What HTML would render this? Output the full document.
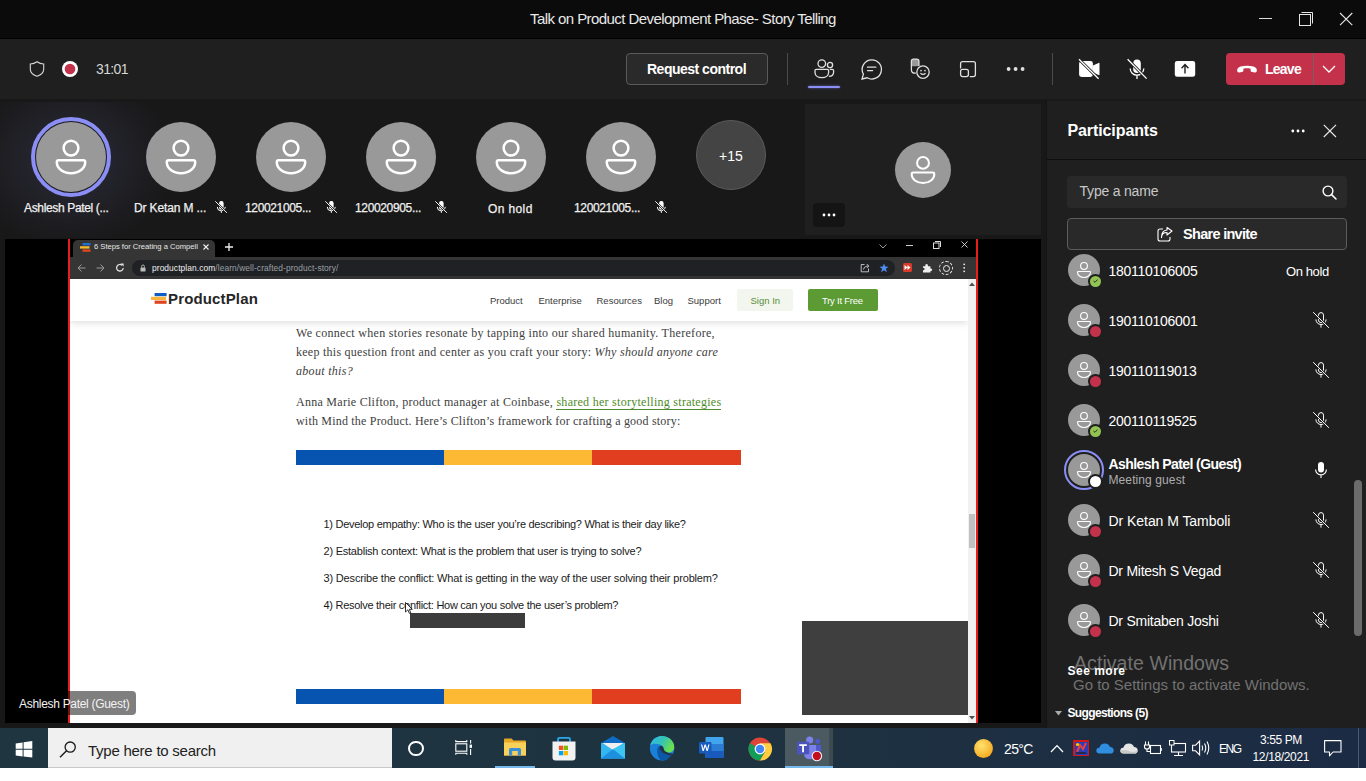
<!DOCTYPE html>
<html><head><meta charset="utf-8">
<style>
*{margin:0;padding:0;box-sizing:border-box}
html,body{width:1366px;height:781px;overflow:hidden;background:#fff;font-family:"Liberation Sans",sans-serif;position:relative}
.a{position:absolute}
.t{position:absolute;white-space:nowrap;line-height:1}
#title{left:0;top:0;width:1366px;height:39px;background:#0b0b0b;border-bottom:1px solid #000}
#tb{left:0;top:39px;width:1366px;height:60px;background:#1f1f1f}
#stage{left:0;top:99px;width:1047px;height:629px;background:#181818}
#panel{left:1047px;top:99px;width:319px;height:629px;background:#1f1f1f}
#task{left:0;top:728px;width:1366px;height:40px;background:linear-gradient(90deg,#1f3540 0%,#1e3340 50%,#1c2b44 100%)}
svg{position:absolute;overflow:visible}
.av{position:absolute;border-radius:50%;background:#999}
.nm{position:absolute;color:#f0f0f0;font-size:12px;white-space:nowrap;line-height:1;letter-spacing:-0.35px;-webkit-text-stroke:0.25px #f0f0f0}
.sf{font-family:"Liberation Serif",serif;font-size:12px;color:#404040;line-height:19px;margin-top:-1px}
.li{font-size:11px;color:#1a1a1a;line-height:27px}
.pr{position:absolute;color:#fff;font-size:14px;letter-spacing:-0.28px;white-space:nowrap;line-height:1}
</style></head><body>
<svg width="0" height="0" style="position:absolute">
<defs>
<symbol id="person" viewBox="0 0 70 70">
<circle cx="35" cy="26.1" r="7.4" fill="none" stroke="#fff" stroke-width="2.5"/>
<path d="M22.6 38.2H47.4Q49.2 38.2 49.2 40C49.2 46.5 43 51.3 35 51.3C27 51.3 20.8 46.5 20.8 40Q20.8 38.2 22.6 38.2Z" fill="none" stroke="#fff" stroke-width="2.5"/>
</symbol>
<symbol id="micoff" viewBox="0 0 12 12">
<path d="M4.1 2.2A2.25 2.25 0 0 1 8.6 2.2V6.4A2.25 2.25 0 0 1 4.1 6.4Z" fill="#fff"/>
<path d="M2.3 5.9A4 4 0 0 0 10.3 5.9M6.35 9.9V11.8" fill="none" stroke="#fff" stroke-width="1"/>
<path d="M0.3 0.3L11.9 11.8" stroke="#1b1b1b" stroke-width="2"/>
<path d="M0.3 0.3L11.9 11.8" stroke="#fff" stroke-width="0.95"/>
</symbol>
<symbol id="micoff2" viewBox="0 0 16 16">
<rect x="5.5" y="0.6" width="5" height="10" rx="2.5" fill="none" stroke="#fff" stroke-width="1"/>
<path d="M2.9 7.4A5.1 5.1 0 0 0 13.1 7.4M8 12.5V15.6" fill="none" stroke="#fff" stroke-width="1"/>
<path d="M0.2 0.2L15.9 15.8" stroke="#1f1f1f" stroke-width="2.2"/>
<path d="M0.2 0.2L15.9 15.8" stroke="#fff" stroke-width="1"/>
</symbol>
</defs>
</svg>

<!-- TITLE BAR -->
<div id="title" class="a">
  <div class="t" style="left:530px;top:11px;font-size:15px;color:#e8e8e8;letter-spacing:-0.57px">Talk on Product Development Phase- Story Telling</div>
  <div class="a" style="left:1259px;top:18px;width:13px;height:1px;background:#ddd"></div>
  <svg style="left:1299px;top:12px" width="15" height="15"><rect x="0.5" y="2.5" width="11" height="11" fill="none" stroke="#e6e6e6"/><path d="M2.5 0.5H13.5V11.5" fill="none" stroke="#e6e6e6"/></svg>
  <svg style="left:1339px;top:12px" width="14" height="14"><path d="M1 1L13.3 13.2M13.3 1L1 13.2" stroke="#e6e6e6" stroke-width="1.1"/></svg>
</div>

<!-- TOOLBAR -->
<div id="tb" class="a">
  <svg style="left:29px;top:22px" width="16" height="16" viewBox="0 0 16 16"><path d="M8 0.8C10 2.3 12.3 3 14.7 3V8.2C14.7 11.5 12.3 13.7 8 15.3C3.7 13.7 1.3 11.5 1.3 8.2V3C3.7 3 6 2.3 8 0.8Z" fill="none" stroke="#d6d6d6" stroke-width="1.1"/></svg>
  <svg style="left:62px;top:22px" width="16" height="16"><circle cx="8" cy="8" r="8" fill="#fff"/><circle cx="8" cy="8" r="5.3" fill="#c4314b"/></svg>
  <div class="t" style="left:96px;top:23px;font-size:14px;color:#d6d6d6;letter-spacing:-0.65px">31:01</div>
  <div class="a" style="left:626px;top:14px;width:142px;height:32px;border:1px solid #5a5a5a;border-radius:4px;background:#2a2a2a"></div>
  <div class="t" style="left:647px;top:23px;font-size:14px;font-weight:bold;color:#fff;letter-spacing:-0.5px">Request control</div>
  <div class="a" style="left:787px;top:14px;width:1px;height:32px;background:#4a4a4a"></div>
  <!-- people -->
  <svg style="left:814px;top:20px" width="21" height="20" viewBox="0 0 21 20"><circle cx="7.8" cy="4.6" r="3.8" fill="none" stroke="#e0e0e0" stroke-width="1.3"/><circle cx="16" cy="6" r="2.6" fill="none" stroke="#e0e0e0" stroke-width="1.3"/><path d="M2.2 10.4H13.4Q14.6 10.4 14.6 11.6V13.4C14.6 16.5 11.7 18.6 7.9 18.6C4 18.6 1 16.5 1 13.4V11.6Q1 10.4 2.2 10.4Z" fill="none" stroke="#e0e0e0" stroke-width="1.3"/><path d="M15.8 10.4H18.3Q19.6 10.4 19.6 11.7V13C19.6 15.6 17.8 17.3 14.9 17.3" fill="none" stroke="#e0e0e0" stroke-width="1.3"/></svg>
  <div class="a" style="left:808px;top:47px;width:32px;height:2.4px;border-radius:1.2px;background:#8b8ff7;box-shadow:0 0 3px rgba(127,133,245,0.6)"></div>
  <!-- chat -->
  <svg style="left:861px;top:20px" width="22" height="21" viewBox="0 0 22 21"><path d="M10.7 0.8A9.6 9.6 0 1 1 6.2 18.8L1 20L2.4 15.1A9.6 9.6 0 0 1 10.7 0.8Z" fill="none" stroke="#e0e0e0" stroke-width="1.3"/><path d="M6.5 8.2H14.8M6.5 11.6H11.6" stroke="#e0e0e0" stroke-width="1.3" stroke-linecap="round"/></svg>
  <!-- hand emoji -->
  <svg style="left:909px;top:18px" width="24" height="23" viewBox="0 0 24 23"><path d="M2.4 4.2Q2.4 2.1 4.5 2.1H7.8Q9.9 2.1 9.9 4.2V9.2H2.4Z" fill="#9a9a9a"/><path d="M2.4 4.2Q2.4 2.1 4.5 2.1H7.8Q9.9 2.1 9.9 4.2V8.6L11.6 9.8Q12.6 10.6 11.9 11.6L8.6 15.2Q7.6 16.2 5.8 16.2Q2.4 16.2 2.4 12.4Z" fill="none" stroke="#e0e0e0" stroke-width="1.3" stroke-linejoin="round"/><circle cx="14" cy="15.1" r="6.2" fill="#1f1f1f" stroke="#1f1f1f" stroke-width="2.4"/><circle cx="14" cy="15.1" r="6.2" fill="#1f1f1f" stroke="#e0e0e0" stroke-width="1.3"/><circle cx="12" cy="13.6" r="0.85" fill="#e0e0e0"/><circle cx="16" cy="13.6" r="0.85" fill="#e0e0e0"/><path d="M11.4 16.2Q14 18.4 16.6 16.2" fill="none" stroke="#e0e0e0" stroke-width="1.2"/></svg>
  <!-- layout -->
  <svg style="left:959px;top:21px" width="18" height="18" viewBox="0 0 18 18"><path d="M1.6 8.4V3.6Q1.6 1.6 3.6 1.6H14.4Q16.4 1.6 16.4 3.6V14.6Q16.4 16.6 14.4 16.6H10.8" fill="none" stroke="#e0e0e0" stroke-width="1.3"/><rect x="1.6" y="9.3" width="7.8" height="7.3" rx="2" fill="none" stroke="#e0e0e0" stroke-width="1.3"/></svg>
  <!-- more -->
  <svg style="left:1006px;top:27px" width="20" height="6" viewBox="0 0 20 6"><circle cx="2.6" cy="3" r="1.9" fill="#e0e0e0"/><circle cx="9.6" cy="3" r="1.9" fill="#e0e0e0"/><circle cx="16.6" cy="3" r="1.9" fill="#e0e0e0"/></svg>
  <div class="a" style="left:1052px;top:14px;width:1px;height:32px;background:#4a4a4a"></div>
  <!-- cam off -->
  <svg style="left:1077px;top:19px" width="24" height="22" viewBox="0 0 24 22"><path d="M4.5 3.1H13.5Q15.9 3.1 15.9 5.5V16.5Q15.9 18.9 13.5 18.9H4.5Q2.1 18.9 2.1 16.5V5.5Q2.1 3.1 4.5 3.1Z" fill="#fff"/><path d="M15.9 7.6L21.6 4.9Q22.5 4.5 22.5 5.5V16.5Q22.5 17.5 21.6 17.1L15.9 14.4Z" fill="#fff"/><path d="M2 1.2L21.6 20.8" stroke="#1f1f1f" stroke-width="3"/><path d="M2 1.2L21.6 20.8" stroke="#fff" stroke-width="1.3"/></svg>
  <!-- mic off -->
  <svg style="left:1126px;top:19px" width="22" height="22" viewBox="0 0 22 22"><path d="M7.2 5.4A3.8 3.8 0 0 1 14.8 5.4V11.2A3.8 3.8 0 0 1 7.2 11.2Z" fill="#fff"/><path d="M4.2 10.4A6.8 6.8 0 0 0 17.8 10.4M11 17.2V21" fill="none" stroke="#fff" stroke-width="1.3"/><path d="M1.6 1.2L20.6 20.6" stroke="#1f1f1f" stroke-width="3"/><path d="M1.6 1.2L20.6 20.6" stroke="#fff" stroke-width="1.3"/></svg>
  <!-- share -->
  <svg style="left:1174px;top:21px" width="22" height="18" viewBox="0 0 22 18"><rect x="0.8" y="1" width="20.4" height="15.8" rx="2.4" fill="#fff"/><path d="M11 13.4V4.8M7.6 8.2L11 4.6L14.4 8.2" fill="none" stroke="#1f1f1f" stroke-width="1.4"/></svg>
  <!-- leave -->
  <div class="a" style="left:1226px;top:14px;width:119px;height:32px;border-radius:4px;background:#c4314b"></div>
  <div class="a" style="left:1313px;top:14px;width:1px;height:32px;background:#7a6066"></div>
  <svg style="left:1236px;top:26px" width="22" height="9" viewBox="0 0 22 9"><path d="M1.2 5.8C1 3.8 2 2.4 4.6 1.6C8.6 0.4 13.4 0.4 17.4 1.6C20 2.4 21 3.8 20.8 5.8C20.7 7 20 7.6 18.8 7.4L16 7C15 6.8 14.6 6.2 14.6 5.2V3.8C12.2 3.2 9.8 3.2 7.4 3.8V5.2C7.4 6.2 7 6.8 6 7L3.2 7.4C2 7.6 1.3 7 1.2 5.8Z" fill="#fff"/></svg>
  <div class="t" style="left:1265px;top:22.5px;font-size:14px;font-weight:bold;color:#fff;letter-spacing:-0.75px">Leave</div>
  <svg style="left:1322px;top:26px" width="14" height="8" viewBox="0 0 14 8"><path d="M1 1L7 7L13 1" fill="none" stroke="#fff" stroke-width="1.3"/></svg>
</div>

<!-- STAGE -->
<div id="stage" class="a">
  <div class="a" style="left:0;top:3px;width:260px;height:136px;background:radial-gradient(ellipse 105px 90px at 71px 58px,rgba(52,52,72,0.75) 0%,rgba(44,44,60,0.5) 45%,rgba(27,27,27,0) 100%)"></div>
  <!-- filmstrip -->
  <div class="a" style="left:31px;top:18px;width:80px;height:80px;border-radius:50%;border:4px solid #8b8ef4;background:#1b1b22"></div>
  <div class="av" style="left:36px;top:23px;width:70px;height:70px"></div><svg style="left:36px;top:23px" width="70" height="70"><use href="#person"/></svg>
  <div class="nm" style="left:24px;top:103px">Ashlesh Patel (...</div>
  <div class="av" style="left:146px;top:23px;width:70px;height:70px"></div><svg style="left:146px;top:23px" width="70" height="70"><use href="#person"/></svg>
  <div class="nm" style="left:134px;top:103px;letter-spacing:-0.13px">Dr Ketan M ...</div>
  <svg style="left:215px;top:102px" width="12" height="12"><use href="#micoff"/></svg>
  <div class="av" style="left:256px;top:23px;width:70px;height:70px"></div><svg style="left:256px;top:23px" width="70" height="70"><use href="#person"/></svg>
  <div class="nm" style="left:245px;top:103px">120021005...</div>
  <svg style="left:325px;top:102px" width="12" height="12"><use href="#micoff"/></svg>
  <div class="av" style="left:366px;top:23px;width:70px;height:70px"></div><svg style="left:366px;top:23px" width="70" height="70"><use href="#person"/></svg>
  <div class="nm" style="left:355px;top:103px">120020905...</div>
  <svg style="left:435px;top:102px" width="12" height="12"><use href="#micoff"/></svg>
  <div class="av" style="left:476px;top:23px;width:70px;height:70px"></div><svg style="left:476px;top:23px" width="70" height="70"><use href="#person"/></svg>
  <div class="nm" style="left:488px;top:103.5px;letter-spacing:0.38px">On hold</div>
  <div class="av" style="left:586px;top:23px;width:70px;height:70px"></div><svg style="left:586px;top:23px" width="70" height="70"><use href="#person"/></svg>
  <div class="nm" style="left:574px;top:103px">120021005...</div>
  <svg style="left:655px;top:102px" width="12" height="12"><use href="#micoff"/></svg>
  <div class="a" style="left:696px;top:21px;width:70px;height:70px;border-radius:50%;background:#444;border:1px solid #5c5c5c"></div>
  <div class="t" style="left:719px;top:49.5px;font-size:14px;color:#fff">+15</div>
  <!-- right tile -->
  <div class="a" style="left:805px;top:5px;width:236px;height:131px;background:#1f1f1f"></div>
  <div class="av" style="left:895px;top:43px;width:56px;height:56px"></div><svg style="left:895px;top:43px" width="56" height="56" viewBox="0 0 70 70"><use href="#person"/></svg>
  <div class="a" style="left:813px;top:104px;width:32px;height:24px;border-radius:4px;background:#141414"></div>
  <svg style="left:822px;top:114px" width="14" height="4"><circle cx="2" cy="2" r="1.4" fill="#fff"/><circle cx="7" cy="2" r="1.4" fill="#fff"/><circle cx="12" cy="2" r="1.4" fill="#fff"/></svg>
  <!-- shared screen -->
  <div class="a" style="left:5px;top:140px;width:1036px;height:484px;background:#000"></div>
  <div class="a" style="left:68px;top:140px;width:2px;height:484px;background:#e81e1e"></div>
  <div class="a" style="left:976px;top:140px;width:2px;height:484px;background:#e81e1e"></div>
  <div id="chrome" class="a" style="left:70px;top:140px;width:906px;height:484px;background:#fff;overflow:hidden">
    <div class="a" style="left:0;top:0;width:906px;height:18px;background:#000"></div>
    <div class="a" style="left:3px;top:1px;width:142px;height:18px;background:#353535;border-radius:5px 5px 0 0"></div>
    <svg style="left:10px;top:4px" width="11" height="9" viewBox="0 0 11 9"><rect x="2.5" y="0" width="8" height="2.4" fill="#1f6fd0"/><rect x="0" y="3.2" width="9.5" height="2.4" fill="#f5b82e"/><rect x="2.5" y="6.4" width="8" height="2.4" fill="#e0451f"/></svg>
    <div class="t" style="left:24px;top:4px;font-size:7.6px;color:#e6e6e6;letter-spacing:0px;width:104px;overflow:hidden">6 Steps for Creating a Compelling</div>
    <svg style="left:133px;top:5px" width="6" height="6"><path d="M0.5 0.5L5.5 5.5M5.5 0.5L0.5 5.5" stroke="#eee" stroke-width="1.1"/></svg>
    <svg style="left:155px;top:4px" width="8" height="8"><path d="M4 0V8M0 4H8" stroke="#eee" stroke-width="1.3"/></svg>
    <svg style="left:809px;top:5px" width="8" height="5"><path d="M0.5 0.5L4 4L7.5 0.5" fill="none" stroke="#aaa" stroke-width="0.9"/></svg>
    <div class="a" style="left:836px;top:6px;width:7px;height:1px;background:#ccc"></div>
    <svg style="left:863px;top:2px" width="8" height="8"><rect x="0.5" y="2" width="5.5" height="5.5" fill="none" stroke="#ddd" stroke-width="1"/><path d="M2 0.5H7.5V6" fill="none" stroke="#ddd" stroke-width="1"/></svg>
    <svg style="left:891px;top:2px" width="7" height="7"><path d="M0.5 0.5L6.5 6.5M6.5 0.5L0.5 6.5" stroke="#ddd" stroke-width="0.9"/></svg>
    <div class="a" style="left:0;top:18px;width:906px;height:22px;background:#353535"></div>
    <svg style="left:7px;top:25px" width="9" height="8"><path d="M8.5 4H1M4.5 0.5L1 4L4.5 7.5" fill="none" stroke="#9a9a9a" stroke-width="1"/></svg>
    <svg style="left:26px;top:25px" width="9" height="8"><path d="M0.5 4H8M4.5 0.5L8 4L4.5 7.5" fill="none" stroke="#9a9a9a" stroke-width="1"/></svg>
    <svg style="left:45px;top:24px" width="10" height="10"><path d="M8.2 5A3.3 3.3 0 1 1 7.2 2.4" fill="none" stroke="#e8e8e8" stroke-width="1.2"/><path d="M5.6 0.6H8.6V3.6Z" fill="#e8e8e8"/></svg>
    <div class="a" style="left:62px;top:21px;width:763px;height:16px;border-radius:8px;background:#202124"></div>
    <svg style="left:70px;top:25px" width="6" height="8"><rect x="0.5" y="3.4" width="5" height="4.2" rx="0.6" fill="#bbb"/><path d="M1.6 3.6V2.4A1.4 1.4 0 0 1 4.4 2.4V3.6" fill="none" stroke="#bbb" stroke-width="0.9"/></svg>
    <div class="t" style="left:82px;top:24.5px;font-size:8.4px;color:#9aa0a6;letter-spacing:0.09px"><span style="color:#f0f0f0">productplan.com</span>/learn/well-crafted-product-story/</div>
    <svg style="left:790px;top:24px" width="10" height="10"><path d="M4.5 1.5H1.2V8.8H8.5V5.5" fill="none" stroke="#ccc" stroke-width="0.9"/><path d="M3.5 6.5Q4 3 8.8 3M6.8 1L8.8 3L6.8 5" fill="none" stroke="#ccc" stroke-width="0.9"/></svg>
    <svg style="left:809px;top:24px" width="10" height="10" viewBox="0 0 10 10"><path d="M5 0.4L6.2 3.6L9.6 3.7L6.9 5.8L7.9 9.2L5 7.2L2.1 9.2L3.1 5.8L0.4 3.7L3.8 3.6Z" fill="#4d8ef0"/></svg>
    <div class="a" style="left:833px;top:24px;width:9px;height:9px;border-radius:1.5px;background:#d93a2b"></div>
    <svg style="left:834px;top:26px" width="7" height="5"><path d="M0.5 0L3.5 2.5L0.5 5ZM3.5 0L6.5 2.5L3.5 5Z" fill="#fff"/></svg>
    <svg style="left:852px;top:24px" width="10" height="10" viewBox="0 0 10 10"><path d="M1 3.2H3.2Q3 1 4.6 1Q6.2 1 6 3.2H8.4V5.4Q10.2 5.4 10.2 6.8Q10.2 8.2 8.4 8.2V9.6H1V7.2Q2.6 7.2 2.6 6Q2.6 4.8 1 4.8Z" fill="#eee"/></svg>
    <div class="a" style="left:869px;top:22px;width:14px;height:14px;border-radius:50%;border:1.2px dashed #eee"></div>
    <div class="a" style="left:872.5px;top:25.5px;width:7px;height:7px;border-radius:50%;border:1.6px solid #eee"></div>
    <svg style="left:893px;top:24px" width="3" height="10"><circle cx="1.2" cy="1.3" r="0.9" fill="#eee"/><circle cx="1.2" cy="4.8" r="0.9" fill="#eee"/><circle cx="1.2" cy="8.3" r="0.9" fill="#eee"/></svg>
    <!-- page -->
    <div class="a" style="left:0;top:40px;width:898px;height:42px;background:#fff;box-shadow:0 2px 7px rgba(0,0,0,0.13)"></div>
    <svg style="left:81px;top:54px" width="16" height="11" viewBox="0 0 16 11"><rect x="3.6" y="0" width="12" height="3.2" fill="#0f5dc2"/><rect x="0" y="3.8" width="15" height="3.2" fill="#f8b53a"/><rect x="3.6" y="7.6" width="12" height="3.2" fill="#e0451f"/></svg>
    <div class="t" style="left:98px;top:51.8px;font-size:15px;font-weight:bold;color:#262626;letter-spacing:0.15px">ProductPlan</div>
    <div class="t" style="left:420px;top:57px;font-size:9.5px;color:#3a3a3a">Product</div>
    <div class="t" style="left:468.5px;top:57px;font-size:9.5px;color:#3a3a3a">Enterprise</div>
    <div class="t" style="left:526.5px;top:57px;font-size:9.5px;color:#3a3a3a">Resources</div>
    <div class="t" style="left:584px;top:57px;font-size:9.5px;color:#3a3a3a">Blog</div>
    <div class="t" style="left:617.5px;top:57px;font-size:9.5px;color:#3a3a3a">Support</div>
    <div class="a" style="left:666.5px;top:49.5px;width:56.5px;height:22px;border-radius:2px;background:#f2f6ee"></div>
    <div class="t" style="left:680.5px;top:57px;font-size:9.5px;color:#5a8c3a">Sign In</div>
    <div class="a" style="left:738px;top:49.5px;width:70px;height:22px;border-radius:2px;background:#5c9b34"></div>
    <div class="t" style="left:752px;top:57px;font-size:9.5px;color:#fff;letter-spacing:-0.25px">Try It Free</div>
    <!-- scrollbar -->
    <div class="a" style="left:898px;top:40px;width:8px;height:444px;background:#f1f1f1"></div>
    <svg style="left:899px;top:43px" width="6" height="4"><path d="M0 4L3 0.5L6 4Z" fill="#505050"/></svg>
    <svg style="left:899px;top:477px" width="6" height="4"><path d="M0 0L3 3.5L6 0Z" fill="#505050"/></svg>
    <div class="a" style="left:899px;top:275px;width:6px;height:34px;background:#c1c1c1"></div>
    <!-- article -->
    <div class="t sf" style="left:226px;top:86px;letter-spacing:0.3px">We connect when stories resonate by tapping into our shared humanity. Therefore,</div>
    <div class="t sf" style="left:226px;top:105px;letter-spacing:0.257px">keep this question front and center as you craft your story: <i>Why should anyone care</i></div>
    <div class="t sf" style="left:226px;top:124px;letter-spacing:0.3px"><i>about this?</i></div>
    <div class="t sf" style="left:226px;top:155px;letter-spacing:0.275px">Anna Marie Clifton, product manager at Coinbase, <span style="color:#4f8a2b;border-bottom:1px solid #4f8a2b">shared her storytelling strategies</span></div>
    <div class="t sf" style="left:226px;top:174px;letter-spacing:0.2px">with Mind the Product. Here’s Clifton’s framework for crafting a good story:</div>
    <div class="a" style="left:226px;top:211px;width:148px;height:15px;background:#0654b0"></div>
    <div class="a" style="left:374px;top:211px;width:148px;height:15px;background:#fdb933"></div>
    <div class="a" style="left:522px;top:211px;width:149px;height:15px;background:#e03e1f"></div>
    <div class="t li" style="left:253.5px;top:272px;letter-spacing:-0.28px">1) Develop empathy: Who is the user you’re describing? What is their day like?</div>
    <div class="t li" style="left:253.5px;top:299px;letter-spacing:-0.226px">2) Establish context: What is the problem that user is trying to solve?</div>
    <div class="t li" style="left:253.5px;top:326px;letter-spacing:-0.17px">3) Describe the conflict: What is getting in the way of the user solving their problem?</div>
    <div class="t li" style="left:253.5px;top:353px;letter-spacing:-0.28px">4) Resolve their conflict: How can you solve the user’s problem?</div>
    <div class="a" style="left:340px;top:374px;width:115px;height:15px;background:#3c3c3c"></div>
    <svg style="left:335px;top:363px" width="8" height="12" viewBox="0 0 8 12"><path d="M0.5 0.5V10L2.8 7.8L4.4 11.4L5.8 10.8L4.3 7.3H7.3Z" fill="#fff" stroke="#000" stroke-width="0.8"/></svg>
    <div class="a" style="left:732px;top:382px;width:166px;height:94px;background:#3f3f3f"></div>
    <div class="a" style="left:226px;top:450px;width:148px;height:15px;background:#0654b0"></div>
    <div class="a" style="left:374px;top:450px;width:148px;height:15px;background:#fdb933"></div>
    <div class="a" style="left:522px;top:450px;width:149px;height:15px;background:#e03e1f"></div>
  </div>
  <div class="a" style="left:12px;top:592px;width:124px;height:24px;border-radius:4px;background:rgba(0,0,0,0.5)"></div>
  <div class="t" style="left:19px;top:599px;font-size:12px;color:#f2f2f2;letter-spacing:-0.3px">Ashlesh Patel (Guest)</div>
</div>

<!-- PANEL -->
<div id="panel" class="a">
  <div class="a" style="left:-1px;top:0;width:1px;height:629px;background:#141414"></div>
  <div class="a" style="left:0;top:0;width:319px;height:2px;background:#1a1a1a"></div>
  <div class="t" style="left:20.5px;top:23.5px;font-size:16px;font-weight:bold;color:#fff;letter-spacing:-0.1px">Participants</div>
  <svg style="left:244px;top:30px" width="14" height="4"><circle cx="1.8" cy="2" r="1.4" fill="#fff"/><circle cx="7" cy="2" r="1.4" fill="#fff"/><circle cx="12.2" cy="2" r="1.4" fill="#fff"/></svg>
  <svg style="left:276px;top:25px" width="14" height="14"><path d="M0.8 0.8L13 13M13 0.8L0.8 13" stroke="#e6e6e6" stroke-width="1.2"/></svg>
  <div class="a" style="left:0;top:59.5px;width:319px;height:1px;background:#0f0f0f"></div>
  <div class="a" style="left:20px;top:77px;width:280px;height:32px;border-radius:4px;background:#292929"></div>
  <div class="t" style="left:32.5px;top:85px;font-size:14px;color:#c8c8c8;letter-spacing:-0.2px">Type a name</div>
  <svg style="left:275px;top:86px" width="15" height="15"><circle cx="6" cy="6" r="4.9" fill="none" stroke="#fff" stroke-width="1.4"/><path d="M9.6 9.6L14 14" stroke="#fff" stroke-width="1.5" stroke-linecap="round"/></svg>
  <div class="a" style="left:20px;top:119px;width:280px;height:32px;border-radius:4px;border:1px solid #5c5c5c;background:#292929"></div>
  <svg style="left:110px;top:128px" width="16" height="15" viewBox="0 0 16 15"><path d="M6 2H3Q1 2 1 4V12Q1 14 3 14H11Q13 14 13 12V10" fill="none" stroke="#fff" stroke-width="1.1"/><path d="M4.5 10.5Q4.5 5.5 10 5.5V8L15 4L10 0.5V3Q4.5 3.5 4.5 10.5Z" fill="none" stroke="#fff" stroke-width="1.1" stroke-linejoin="round"/></svg>
  <div class="t" style="left:136px;top:128px;font-size:14.5px;font-weight:bold;color:#fff;letter-spacing:-0.7px">Share invite</div>
  <!-- rows -->
  <div class="av" style="left:21px;top:155px;width:32px;height:32px"></div><svg style="left:21px;top:155px" width="32" height="32" viewBox="0 0 70 70"><use href="#person"/></svg>
  <div class="a" style="left:40.5px;top:174.5px;width:15px;height:15px;border-radius:50%;background:#1f1f1f"></div><div class="a" style="left:42.5px;top:176.5px;width:11px;height:11px;border-radius:50%;background:#92c353"></div>
  <svg style="left:45.5px;top:179.5px" width="5" height="4"><path d="M0.5 2L2 3.3L4.5 0.6" fill="none" stroke="#1f1f1f" stroke-width="0.9"/></svg>
  <div class="pr" style="left:61.5px;top:165px">180110106005</div>
  <div class="pr" style="left:239px;top:165.5px;font-size:13px;letter-spacing:-0.4px">On hold</div>

  <div class="av" style="left:21px;top:205px;width:32px;height:32px"></div><svg style="left:21px;top:205px" width="32" height="32" viewBox="0 0 70 70"><use href="#person"/></svg>
  <div class="a" style="left:40.5px;top:224.5px;width:15px;height:15px;border-radius:50%;background:#1f1f1f"></div><div class="a" style="left:42.5px;top:226.5px;width:11px;height:11px;border-radius:50%;background:#c4314b"></div>
  <div class="pr" style="left:61.5px;top:215px">190110106001</div>
  <svg style="left:266px;top:213px" width="16" height="16"><use href="#micoff2"/></svg>

  <div class="av" style="left:21px;top:255px;width:32px;height:32px"></div><svg style="left:21px;top:255px" width="32" height="32" viewBox="0 0 70 70"><use href="#person"/></svg>
  <div class="a" style="left:40.5px;top:274.5px;width:15px;height:15px;border-radius:50%;background:#1f1f1f"></div><div class="a" style="left:42.5px;top:276.5px;width:11px;height:11px;border-radius:50%;background:#c4314b"></div>
  <div class="pr" style="left:61.5px;top:265px">190110119013</div>
  <svg style="left:266px;top:263px" width="16" height="16"><use href="#micoff2"/></svg>

  <div class="av" style="left:21px;top:305px;width:32px;height:32px"></div><svg style="left:21px;top:305px" width="32" height="32" viewBox="0 0 70 70"><use href="#person"/></svg>
  <div class="a" style="left:40.5px;top:324.5px;width:15px;height:15px;border-radius:50%;background:#1f1f1f"></div><div class="a" style="left:42.5px;top:326.5px;width:11px;height:11px;border-radius:50%;background:#92c353"></div>
  <svg style="left:45.5px;top:329.5px" width="5" height="4"><path d="M0.5 2L2 3.3L4.5 0.6" fill="none" stroke="#1f1f1f" stroke-width="0.9"/></svg>
  <div class="pr" style="left:61.5px;top:315px">200110119525</div>
  <svg style="left:266px;top:313px" width="16" height="16"><use href="#micoff2"/></svg>

  <div class="a" style="left:17px;top:351px;width:40px;height:40px;border-radius:50%;border:2px solid #8b8ef4"></div>
  <div class="av" style="left:21px;top:355px;width:32px;height:32px"></div><svg style="left:21px;top:355px" width="32" height="32" viewBox="0 0 70 70"><use href="#person"/></svg>
  <div class="a" style="left:40.5px;top:374.5px;width:15px;height:15px;border-radius:50%;background:#1f1f1f"></div><div class="a" style="left:42.5px;top:376.5px;width:11px;height:11px;border-radius:50%;background:#fff"></div>
  <div class="pr" style="left:61.5px;top:357.5px;font-weight:bold;letter-spacing:-0.58px">Ashlesh Patel (Guest)</div>
  <div class="t" style="left:61.5px;top:375px;font-size:12px;color:#adadad;letter-spacing:0.1px">Meeting guest</div>
  <svg style="left:1315px;top:462px;left:268px;top:363px" width="12" height="16" viewBox="0 0 12 16"><rect x="3" y="0" width="6" height="10.5" rx="3" fill="#fff"/><path d="M0.6 7.5A5.4 5.4 0 0 0 11.4 7.5M6 13V16" fill="none" stroke="#fff" stroke-width="1.1"/></svg>

  <div class="av" style="left:21px;top:405px;width:32px;height:32px"></div><svg style="left:21px;top:405px" width="32" height="32" viewBox="0 0 70 70"><use href="#person"/></svg>
  <div class="a" style="left:40.5px;top:424.5px;width:15px;height:15px;border-radius:50%;background:#1f1f1f"></div><div class="a" style="left:42.5px;top:426.5px;width:11px;height:11px;border-radius:50%;background:#c4314b"></div>
  <div class="pr" style="left:61.5px;top:415px;letter-spacing:-0.05px">Dr Ketan M Tamboli</div>
  <svg style="left:266px;top:413px" width="16" height="16"><use href="#micoff2"/></svg>

  <div class="av" style="left:21px;top:455px;width:32px;height:32px"></div><svg style="left:21px;top:455px" width="32" height="32" viewBox="0 0 70 70"><use href="#person"/></svg>
  <div class="a" style="left:40.5px;top:474.5px;width:15px;height:15px;border-radius:50%;background:#1f1f1f"></div><div class="a" style="left:42.5px;top:476.5px;width:11px;height:11px;border-radius:50%;background:#c4314b"></div>
  <div class="pr" style="left:61.5px;top:465px;letter-spacing:-0.25px">Dr Mitesh S Vegad</div>
  <svg style="left:266px;top:463px" width="16" height="16"><use href="#micoff2"/></svg>

  <div class="av" style="left:21px;top:505px;width:32px;height:32px"></div><svg style="left:21px;top:505px" width="32" height="32" viewBox="0 0 70 70"><use href="#person"/></svg>
  <div class="a" style="left:40.5px;top:524.5px;width:15px;height:15px;border-radius:50%;background:#1f1f1f"></div><div class="a" style="left:42.5px;top:526.5px;width:11px;height:11px;border-radius:50%;background:#c4314b"></div>
  <div class="pr" style="left:61.5px;top:515px;letter-spacing:-0.25px">Dr Smitaben Joshi</div>
  <svg style="left:266px;top:513px" width="16" height="16"><use href="#micoff2"/></svg>

  <div class="a" style="left:307px;top:381px;width:7.5px;height:156px;border-radius:4px;background:#6b6b6b"></div>
  <div class="t" style="left:27px;top:554.8px;font-size:19.5px;color:#727272;letter-spacing:0.07px">Activate Windows</div>
  <div class="t" style="left:20.5px;top:566px;font-size:12px;font-weight:bold;color:#fff;letter-spacing:0.5px">See more</div>
  <div class="t" style="left:26px;top:578px;font-size:15px;color:#727272;letter-spacing:0px">Go to Settings to activate Windows.</div>
  <svg style="left:8px;top:612px" width="7" height="5"><path d="M0 0H7L3.5 4.5Z" fill="#aaa"/></svg>
  <div class="t" style="left:20.5px;top:607.5px;font-size:12px;font-weight:bold;color:#fff;letter-spacing:-0.65px">Suggestions (5)</div>
</div>

<!-- TASKBAR -->
<div id="task" class="a">
  <svg style="left:15px;top:13px" width="18" height="17" viewBox="0 0 18 17"><path d="M0.7 2.4L7.6 1.4V7.8H0.7Z M8.6 1.3L17.3 0V7.8H8.6Z M0.7 8.8H7.6V15.4L0.7 14.4Z M8.6 8.8H17.3V16.6L8.6 15.5Z" fill="#fff"/></svg>
  <div class="a" style="left:48px;top:0;width:344px;height:40px;background:#f0f0f0;border-bottom:1px solid #c8c8c8"></div>
  <svg style="left:59px;top:13px" width="18" height="17" viewBox="0 0 18 17"><circle cx="11.2" cy="6.1" r="5.1" fill="none" stroke="#1a1a1a" stroke-width="1.3"/><path d="M7.5 9.8L1 16.2" stroke="#1a1a1a" stroke-width="1.4"/></svg>
  <div class="t" style="left:88px;top:15px;font-size:15px;color:#222;letter-spacing:-0.25px">Type here to search</div>
  <div class="a" style="left:408px;top:12.5px;width:15.5px;height:15.5px;border-radius:50%;border:2px solid #fff"></div>
  <svg style="left:455px;top:11px" width="18" height="17" viewBox="0 0 18 17"><path d="M0.8 1V2.6H11.8V1M0.8 15.8V14.2H11.8V15.8" fill="none" stroke="#fff" stroke-width="1.1"/><rect x="0.8" y="4.8" width="11" height="7.4" fill="none" stroke="#fff" stroke-width="1.1"/><path d="M15.6 1V4.5M15.6 10V16" stroke="#fff" stroke-width="1.1"/><rect x="14.6" y="5.6" width="2.4" height="3.3" fill="#fff"/></svg>
  <div class="a" style="left:495px;top:38px;width:40px;height:2px;background:#76b9ed"></div>
  <svg style="left:504px;top:10px" width="22" height="18" viewBox="0 0 22 18"><path d="M0 1.5Q0 0.5 1 0.5H7.5L9.5 2.5H21Q22 2.5 22 3.5V17.5H0Z" fill="#e7a825"/><path d="M0 4.5H22V17.5H0Z" fill="#f8d15a"/><path d="M5 17.5V11.5Q5 10 6.5 10H15.5Q17 10 17 11.5V17.5H13.8V13H8.2V17.5Z" fill="#3b8fd9"/></svg>
  <svg style="left:552px;top:9px" width="24" height="24" viewBox="0 0 24 24"><path d="M6 5.5V2.2Q6 0.9 7.3 0.9H16.7Q18 0.9 18 2.2V5.5" fill="none" stroke="#29a8ea" stroke-width="1.8"/><path d="M0.5 4.6H23.5V20.6Q23.5 23.6 20.5 23.6H3.5Q0.5 23.6 0.5 20.6Z" fill="#f2f2f2"/><rect x="6.9" y="8.7" width="4.3" height="4.3" fill="#f25022"/><rect x="11.7" y="8.7" width="4.3" height="4.3" fill="#7fba00"/><rect x="6.9" y="14" width="4.3" height="4.3" fill="#00a4ef"/><rect x="11.7" y="14" width="4.3" height="4.3" fill="#ffb900"/></svg>
  <svg style="left:601px;top:7.8px" width="24" height="23" viewBox="0 0 24 23"><path d="M0 7L12 0L24 7V22.5H0Z" fill="#0f6cc4"/><path d="M0 7H24V22.5H0Z" fill="#34b6f0"/><path d="M1.5 7H22.5L12 14Z" fill="#f0f0f0"/><path d="M0 22.5L12 13L24 22.5Z" fill="#1e90e0"/><path d="M12 13L24 7V22.5Z" fill="#3cc4f2"/></svg>
  <svg style="left:650px;top:7.7px" width="24.2" height="24.6" viewBox="120 90 590 600"><defs><linearGradient id="eg" x1="0" y1="0" x2="1" y2="0.4"><stop offset="0" stop-color="#2fb8f0"/><stop offset="0.55" stop-color="#35c4b4"/><stop offset="1" stop-color="#6ae04e"/></linearGradient></defs><circle cx="415" cy="390" r="297" fill="#1a80d8"/><path d="M295 420C300 340 360 320 420 330L460 480C520 530 600 540 665 530C620 620 520 690 420 690C340 680 290 560 295 420Z" fill="#0d58a6"/><path d="M125 320C160 150 330 90 415 93C580 95 712 220 712 360C712 440 650 500 570 495C500 490 455 460 450 420C445 370 420 320 360 300C280 270 180 260 125 320Z" fill="url(#eg)"/><path d="M360 360C380 320 450 330 455 400C458 450 520 500 665 522L660 548C560 565 470 530 420 480C370 440 350 400 360 360Z" fill="#1f3340"/><path d="M640 560L720 480L720 700L500 700Z" fill="#1f3340"/></svg>
  <svg style="left:699px;top:9px" width="25" height="21" viewBox="0 0 25 21"><rect x="6.5" y="0" width="18" height="21" rx="1" fill="#41a5ee"/><rect x="6.5" y="7" width="18" height="7" fill="#2b7cd3"/><rect x="6.5" y="14" width="18" height="7" fill="#185abd"/><rect x="0" y="5" width="12.5" height="11.5" rx="1" fill="#185abd"/><path d="M2 7.5L3.6 14H4.8L6.2 9.6L7.6 14H8.8L10.5 7.5H9.3L8.2 12L6.8 7.5H5.6L4.2 12L3.2 7.5Z" fill="#fff"/></svg>
  <svg style="left:748px;top:8.5px" width="24" height="24" viewBox="0 0 24 24"><circle cx="12" cy="12" r="11.5" fill="#db4437"/><path d="M12 12L2 6.3A11.5 11.5 0 0 0 12 23.5L17 14.9Z" fill="#0f9d58"/><path d="M12 12L12 6.3H22.5A11.5 11.5 0 0 1 12 23.5L17 14.9Z" fill="#ffcd40"/><circle cx="12" cy="12" r="5.4" fill="#fff"/><circle cx="12" cy="12" r="4.2" fill="#4285f4"/></svg>
  <div class="a" style="left:785px;top:0;width:44px;height:40px;background:#4b5960"></div>
  <div class="a" style="left:829px;top:0;width:4px;height:40px;background:#3d4a52"></div>
  <div class="a" style="left:785px;top:38px;width:48px;height:2px;background:#76b9ed"></div>
  <svg style="left:796px;top:8px" width="28" height="26" viewBox="0 0 28 26"><circle cx="13.7" cy="4" r="3.6" fill="#7b83eb"/><circle cx="21.7" cy="5.3" r="2.5" fill="#5059c9"/><path d="M19 9H25V15.5Q25 18 22 18Q19 18 19 15.5Z" fill="#5059c9"/><path d="M8 9H20V17Q20 23.3 14 23.3Q8 23.3 8 17Z" fill="#7b83eb"/><rect x="0.9" y="5.8" width="12.3" height="12.4" rx="0.8" fill="#4b53bc"/><path d="M3.3 8.3H10.8V10H8V16.3H6.1V10H3.3Z" fill="#fff"/><circle cx="20.9" cy="20" r="4.7" fill="#c50f1f" stroke="#f2f2f2" stroke-width="1.1"/></svg>
  <svg style="left:974px;top:10.5px" width="20" height="20"><defs><radialGradient id="sg" cx="0.4" cy="0.35" r="0.7"><stop offset="0" stop-color="#ffe170"/><stop offset="1" stop-color="#f4a81c"/></radialGradient></defs><circle cx="9.5" cy="9.5" r="9.4" fill="url(#sg)"/></svg>
  <div class="t" style="left:1004px;top:14px;font-size:14px;color:#fff;letter-spacing:-0.6px">25°C</div>
  <svg style="left:1050px;top:15.5px" width="14" height="9"><path d="M1 8L7 1.6L13 8" fill="none" stroke="#fff" stroke-width="1.3"/></svg>
  <div class="a" style="left:1073px;top:12px;width:16px;height:16px;background:#d41818"></div>
  <div class="a" style="left:1074.5px;top:13.5px;width:13px;height:13px;background:#2a3eb8"></div>
  <svg style="left:1074px;top:13px" width="14" height="14" viewBox="0 0 14 14"><path d="M3 11L6 4L9 8L12 2" fill="none" stroke="#e84040" stroke-width="2"/><circle cx="3.5" cy="3.5" r="1.6" fill="#f5d200"/><path d="M2 12H12" stroke="#222" stroke-width="1.4"/></svg>
  <svg style="left:1096px;top:14.5px" width="18" height="11" viewBox="0 0 18 11"><path d="M3.5 10.5Q0.3 10.5 0.3 7.6Q0.3 5 3.3 4.8Q4.5 0.5 9 0.5Q12.8 0.5 14 4Q17.7 4.3 17.7 7.4Q17.7 10.5 14.2 10.5Z" fill="#2f8ee0"/></svg>
  <svg style="left:1120px;top:14.5px" width="18" height="11" viewBox="0 0 18 11"><path d="M3.5 10.5Q0.3 10.5 0.3 7.6Q0.3 5 3.3 4.8Q4.5 0.5 9 0.5Q12.8 0.5 14 4Q17.7 4.3 17.7 7.4Q17.7 10.5 14.2 10.5Z" fill="#e6e6e6"/><path d="M3.5 10.5Q0.3 10.5 0.3 7.6Q4 6 9 8Q14 10 17.7 7.4Q17.7 10.5 14.2 10.5Z" fill="#c8c8c8"/></svg>
  <svg style="left:1144px;top:12.5px" width="18" height="14" viewBox="0 0 18 14"><path d="M1.5 0.5V4M4.5 0.5V4M0.5 4H5.5V6Q5.5 8 3 8Q0.5 8 0.5 6Z M3 8V10.5H6" fill="none" stroke="#fff" stroke-width="1.1"/><rect x="6.5" y="4.5" width="10" height="8" fill="none" stroke="#fff" stroke-width="1.1"/><rect x="16.5" y="7" width="1.3" height="3" fill="#fff"/></svg>
  <svg style="left:1169px;top:11.5px" width="17" height="16" viewBox="0 0 17 16"><rect x="2.5" y="3.5" width="14" height="8.5" fill="none" stroke="#fff" stroke-width="1.1"/><path d="M9.5 12V15.5M5 15.5H14" stroke="#fff" stroke-width="1.1"/><rect x="0.5" y="0.5" width="4.5" height="4.5" fill="#1b2f3b" stroke="#fff" stroke-width="1"/></svg>
  <svg style="left:1192px;top:12px" width="18" height="16" viewBox="0 0 18 16"><path d="M0.6 5.2H3.6L7.6 1.2V14.8L3.6 10.8H0.6Z" fill="none" stroke="#fff" stroke-width="1.1"/><path d="M10 5.5Q11.4 8 10 10.5M12.5 3.5Q15 8 12.5 12.5M15 1.5Q18.5 8 15 14.5" fill="none" stroke="#fff" stroke-width="1.1"/></svg>
  <div class="t" style="left:1219px;top:15px;font-size:12px;color:#fff;letter-spacing:-1.5px">ENG</div>
  <div class="t" style="left:1260px;top:6px;font-size:12px;color:#fff;letter-spacing:-0.4px">3:55 PM</div>
  <div class="t" style="left:1252.5px;top:23px;font-size:12px;color:#fff;letter-spacing:-0.35px">12/18/2021</div>
  <svg style="left:1324px;top:11.5px" width="18" height="17" viewBox="0 0 18 17"><path d="M0.6 0.6H17V12H9L5.5 15.8V12H0.6Z" fill="none" stroke="#fff" stroke-width="1.1" stroke-linejoin="round"/></svg>
  <div class="a" style="left:1358px;top:0;width:1px;height:40px;background:#4a5a6a"></div>
</div>
</body></html>
